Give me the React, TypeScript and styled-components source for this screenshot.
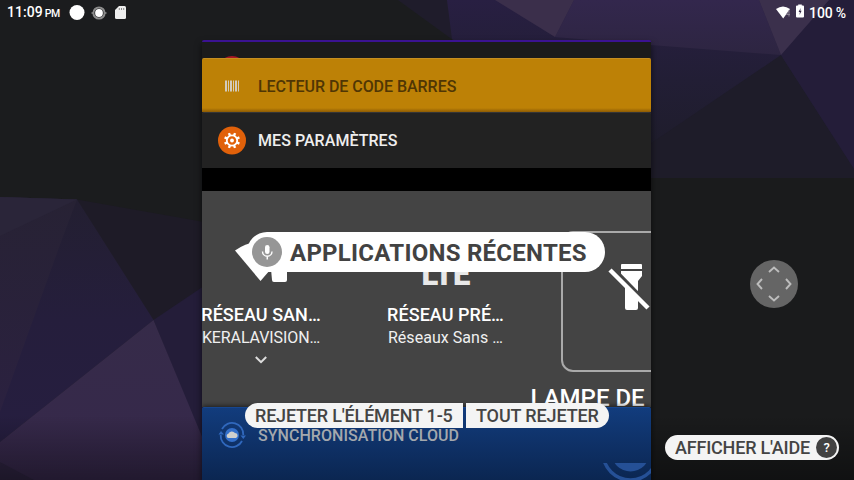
import React from "react";
import styled, { createGlobalStyle } from "styled-components";

const GlobalStyle = createGlobalStyle`
  html, body { margin: 0; padding: 0; background: #1b1c1e; }
  * { box-sizing: border-box; }
`;

const Screen = styled.main`
  position: relative;
  width: 854px;
  height: 480px;
  overflow: hidden;
  font-family: Roboto, "Liberation Sans", sans-serif;
  color: #fff;
`;

const Wallpaper = styled.svg`
  position: absolute;
  inset: 0;
  display: block;
`;

const StatusBar = styled.header`
  position: absolute;
  inset: 0 0 auto 0;
  height: 25px;
  padding: 0 8px 0 7px;
  display: flex;
  align-items: center;
  justify-content: space-between;
`;

const StatusGroup = styled.div<{ $gap: number }>`
  display: flex;
  align-items: center;
  gap: ${(p) => p.$gap}px;
`;

const StatusText = styled.span<{ $spacing?: number }>`
  font-size: 14px;
  line-height: 24px;
  font-weight: 500;
  letter-spacing: ${(p) => p.$spacing ?? 0}px;
  white-space: nowrap;
  small { font-size: 10.5px; margin-left: 2px; letter-spacing: -0.4px; }
`;

const Icon = styled.svg`
  display: block;
  flex: none;
  overflow: visible;
`;

const Stack = styled.section`
  position: relative;
  width: 449px;
  height: 440px;
  margin: 40px 0 0 202px;
  display: flex;
  flex-direction: column;
  box-shadow: 0 4px 7px 0 rgba(0, 0, 0, 0.6);
  border-radius: 2px 2px 0 0;
`;

const HiddenCard = styled.div`
  height: 18px;
  flex: none;
  overflow: hidden;
  display: flex;
  background: #1b1b1b;
  border-top: 2px solid #3b1292;
  border-radius: 2px 2px 0 0;
  padding: 14px 0 0 16px;
`;

const HiddenBadge = styled.div`
  width: 28px;
  height: 28px;
  border-radius: 50%;
  background: #a81724;
  flex: none;
`;

const CardHeader = styled.div<{ $bg: string; $edge: string; $fg: string; $h: number; $pt: number }>`
  height: ${(p) => p.$h}px;
  flex: none;
  display: flex;
  align-items: center;
  gap: 12px;
  padding: ${(p) => p.$pt}px 0 0 16px;
  background: ${(p) => p.$bg};
  border-top: 1px solid ${(p) => p.$edge};
  border-radius: 2px 2px 0 0;
  color: ${(p) => p.$fg};
`;

const CardTitle = styled.span<{ $spacing: number }>`
  font-size: 16px;
  line-height: 20px;
  font-weight: 500;
  letter-spacing: ${(p) => p.$spacing}px;
  white-space: nowrap;
`;

const BlackBar = styled.div`
  height: 23px;
  flex: none;
  background: #000;
`;

const Tiles = styled.div`
  height: 216px;
  flex: none;
  display: flex;
  align-items: flex-start;
  overflow: hidden;
  background: #444;
`;

const Tile = styled.div<{ $ml: number }>`
  width: 118px;
  margin-left: ${(p) => p.$ml}px;
  flex: none;
  display: flex;
  flex-direction: column;
  align-items: center;
  padding-top: 51px;
`;

const TileIcon = styled.div`
  height: 61px;
  display: flex;
`;

const TileName = styled.span`
  font-size: 18px;
  line-height: 24px;
  font-weight: 500;
  letter-spacing: 0.04px;
  white-space: nowrap;
`;

const TileDetail = styled.span<{ $spacing: number }>`
  font-size: 16px;
  line-height: 22px;
  letter-spacing: ${(p) => p.$spacing}px;
  color: #f0f0f0;
  white-space: nowrap;
`;

const Network = styled.span`
  font-size: 31px;
  line-height: 40px;
  font-weight: 900;
  letter-spacing: -0.8px;
  color: #e8e8e8;
  margin-top: 13px;
`;

const TorchTile = styled.div`
  margin-left: 54px;
  padding-top: 40px;
  flex: none;
  display: flex;
  flex-direction: column;
`;

const TorchFrame = styled.div`
  width: 140px;
  height: 141px;
  flex: none;
  margin-left: 2px;
  border: 2px solid #aaa;
  border-radius: 12px;
  padding: 30px 0 0 44px;
`;

const TorchName = styled.span`
  margin: 10px 0 0 -28px;
  font-size: 24px;
  line-height: 32px;
  font-weight: 500;
  white-space: nowrap;
`;

const CloudCard = styled.div`
  flex: 1;
  position: relative;
  background: linear-gradient(#123c7d, #0b2651);
  border-radius: 2px 2px 0 0;
  border-top: 1px solid #17468f;
  box-shadow: 0 -1px 5px rgba(0, 0, 0, 0.6);
  clip-path: inset(-8px 0 0 0);
`;

const CloudHeader = styled.div`
  height: 56px;
  display: flex;
  align-items: center;
  gap: 12px;
  padding-left: 16px;
  color: #a4a8ad;
`;

const CloudArt = styled.svg`
  position: absolute;
  right: 0;
  bottom: 0;
`;

const VoiceLabel = styled.div`
  position: absolute;
  left: 247px;
  top: 232px;
  width: 358px;
  height: 40px;
  border-radius: 20px;
  background: #fff;
  color: #424242;
  display: flex;
  align-items: center;
  gap: 8px;
  padding-left: 5px;
  font-size: 24px;
  font-weight: 700;
  letter-spacing: 0.26px;
  line-height: 28px;
  white-space: nowrap;
`;

const VoiceText = styled.span`
  padding-top: 2px;
`;

const VoiceActions = styled.div`
  position: absolute;
  left: 245px;
  top: 403px;
  display: flex;
  gap: 3px;
`;

const Action = styled.button<{ $w: number; $side: "left" | "right"; $spacing: number }>`
  width: ${(p) => p.$w}px;
  height: 25px;
  padding: 0 0 0 10px;
  border: 0;
  text-align: left;
  border-radius: ${(p) => (p.$side === "left" ? "13px 0 0 13px" : "0 13px 13px 0")};
  background: #f4f4f4;
  color: #444;
  font: 500 18px/25px Roboto, "Liberation Sans", sans-serif;
  letter-spacing: ${(p) => p.$spacing}px;
  white-space: nowrap;
`;

const HelpButton = styled.button`
  position: absolute;
  left: 665px;
  top: 435px;
  width: 174px;
  height: 25px;
  border: 0;
  padding: 0 2px 0 10px;
  display: flex;
  align-items: center;
  justify-content: space-between;
  border-radius: 13px;
  background: #f4f4f4;
  color: #444;
  font: 500 18px/25px Roboto, "Liberation Sans", sans-serif;
  letter-spacing: -0.2px;
  white-space: nowrap;
`;

const HelpMark = styled.span`
  width: 21px;
  height: 21px;
  border-radius: 50%;
  background: #424242;
  color: #fff;
  font-size: 13px;
  line-height: 21px;
  text-align: center;
`;

const Pad = styled.div`
  position: absolute;
  left: 750px;
  top: 260px;
  width: 48px;
  height: 48px;
  border-radius: 50%;
  background: #656565;
`;

const teeth = [0, 45, 90, 135, 180, 225, 270, 315];

export default function App() {
  return (
    <Screen>
      <GlobalStyle />
      <Wallpaper width="854" height="480" viewBox="0 0 854 480">
        <defs>
          <linearGradient id="fade" x1="0" y1="0" x2="0" y2="1">
            <stop offset="0" stopColor="#000" stopOpacity="0" />
            <stop offset="1" stopColor="#000" stopOpacity="0.38" />
          </linearGradient>
          <linearGradient id="deep" x1="0" y1="0" x2="0" y2="1">
            <stop offset="0" stopColor="#231f31" />
            <stop offset="0.5" stopColor="#251e3c" />
            <stop offset="1" stopColor="#261e40" />
          </linearGradient>
          <linearGradient id="side" x1="0" y1="0" x2="0" y2="1">
            <stop offset="0" stopColor="#272234" />
            <stop offset="1" stopColor="#2b2140" />
          </linearGradient>
          <linearGradient id="peak" x1="0" y1="0" x2="0" y2="1">
            <stop offset="0" stopColor="#362b49" />
            <stop offset="1" stopColor="#36284b" />
          </linearGradient>
          <linearGradient id="dusk" x1="0" y1="0" x2="0" y2="1">
            <stop offset="0" stopColor="#281f42" />
            <stop offset="0.45" stopColor="#221e35" />
            <stop offset="1" stopColor="#1d1c27" />
          </linearGradient>
          <linearGradient id="roof" x1="0" y1="0" x2="0" y2="1">
            <stop offset="0" stopColor="#33274d" />
            <stop offset="1" stopColor="#2d2541" />
          </linearGradient>
        </defs>
        <rect width="854" height="480" fill="#1b1c1e" />
        <path d="M0 197L77 199.500L210 223V480H0Z" fill="#1e1b27" />
        <path d="M0 197L77 199.500L153.500 320L0 442Z" fill="url(#deep)" />
        <path d="M0 197L77 199.500L61 242L0 412Z" fill="url(#side)" />
        <path d="M0 197L77 199.500L0 236Z" fill="#2a2539" />
        <path d="M153.500 320L210 282V460Z" fill="#241d39" />
        <path d="M153.500 320L0 442V480H220Z" fill="url(#peak)" />
        <path d="M0 462L34 480H0Z" fill="#2e2441" />
        <path d="M398 0H448L453 40Z" fill="#1f1c2b" />
        <path d="M447 0H854V178H640L452 39Z" fill="url(#dusk)" />
        <path d="M574 0H759L781 55L651 45L555 37Z" fill="url(#roof)" />
        <path d="M495 0H574L555 37Z" fill="#3b2f4b" />
        <path d="M781 55L854 169V178H600Z" fill="#1e1c29" />
        <path d="M781 55L854 169V0H829Z" fill="#241d39" />
        <path d="M759 0H829L781 55Z" fill="#3b304c" />
        <rect x="600" y="178" width="254" height="302" fill="#1a1b1c" />
        <rect y="415" width="854" height="65" fill="url(#fade)" />
      </Wallpaper>

      <StatusBar>
        <StatusGroup $gap={8}>
          <StatusText $spacing={0.05}>11:09<small>PM</small></StatusText>
          <Icon width="15" height="15" viewBox="0 0 15 15">
            <circle cx="9" cy="7.500" r="7.500" fill="#fff" />
          </Icon>
          <Icon width="16" height="16" viewBox="0 0 16 16">
            <circle cx="8" cy="8" r="5.600" fill="none" stroke="#8c8c8c" strokeWidth="2" />
            <path d="M.5 8H3M13 8H15.500" stroke="#8c8c8c" strokeWidth="1.500" />
            <circle cx="8" cy="8" r="3.900" fill="#fff" />
          </Icon>
          <Icon width="12" height="13" viewBox="0 0 12 13">
            <path d="M4 0H9.500Q11 0 11 1.500V11.500Q11 13 9.500 13H1.500Q0 13 0 11.500V4Z" fill="#eee" />
            <path d="M4.300 2V4M6.500 2V4M8.700 2V4" stroke="#8a8a8a" strokeWidth="1" />
          </Icon>
        </StatusGroup>
        <StatusGroup $gap={5}>
          <Icon width="15" height="14" viewBox="0 0 15 14">
            <path d="M0 3Q7 -2 14 3L7.200 12.500Z" fill="#fff" />
            <path d="M13 4.500L10.500 8.500H14M13 4.500V10.500" fill="none" stroke="#8a8292" />
          </Icon>
          <Icon width="8" height="16" viewBox="0 0 8 16">
            <path d="M2.200 -.5H5.800V.5H7Q8 .5 8 1.500V11.500Q8 12.500 7 12.500H1Q0 12.500 0 11.500V1.500Q0 .5 1 .5H2.200Z" fill="#fff" />
            <path d="M4.600 3L2.600 7H3.900L3.500 10L5.600 5.700H4.300Z" fill="#302543" />
          </Icon>
          <StatusText $spacing={-0.15}>100 %</StatusText>
        </StatusGroup>
      </StatusBar>

      <Stack>
        <HiddenCard><HiddenBadge /></HiddenCard>
        <CardHeader $h={54} $pt={2} $bg="linear-gradient(transparent 49px, rgba(70,35,0,.4)), #bd8106" $edge="#c58e20" $fg="#503604">
          <Icon width="28" height="28" viewBox="0 0 28 28">
            <path d="M7 7.500h2v11H7zM10 7.500h1v11h-1zM12 7.500h2v11h-2zM15 7.500h1v11h-1zM17 7.500h2v11h-2zM20 7.500h1v11h-1z" fill="#d3cbbb" />
          </Icon>
          <CardTitle $spacing={-0.04}>LECTEUR DE CODE BARRES</CardTitle>
        </CardHeader>
        <CardHeader $h={56} $pt={0} $bg="#222" $edge="#353535" $fg="#eee">
          <Icon width="28" height="28" viewBox="0 0.5 28 28">
            <circle cx="14" cy="14" r="14" fill="#e1610a" />
            <circle cx="14" cy="14" r="5.200" fill="none" stroke="#fff" strokeWidth="1.800" />
            {teeth.map((a) => (
              <path key={a} d="M12.800 6H15.200V9H12.800Z" fill="#fff" transform={`rotate(${a + 22.5} 14 14)`} />
            ))}
            <circle cx="14" cy="14" r="1.900" fill="#fff" />
          </Icon>
          <CardTitle $spacing={0.05}>MES PARAMÈTRES</CardTitle>
        </CardHeader>
        <BlackBar />
        <Tiles>
          <Tile $ml={0}>
            <TileIcon>
              <Icon width="52" height="41" viewBox="0 0 52 41">
                <path d="M0 8.500Q25 -9 52 8.500L25.500 39Z" fill="#fff" />
                <path d="M36 27H52V38Q52 40 50 40H39Q37 40 37 38Z" fill="#fff" />
              </Icon>
            </TileIcon>
            <TileName>RÉSEAU SAN…</TileName>
            <TileDetail $spacing={-0.1}>KERALAVISION…</TileDetail>
            <Icon width="12" height="22" viewBox="0 0 12 22">
              <path d="M.8 8L6 13.200L11.200 8" fill="none" stroke="#ddd" strokeWidth="2" />
            </Icon>
          </Tile>
          <Tile $ml={66.5}>
            <TileIcon><Network>LTE</Network></TileIcon>
            <TileName>RÉSEAU PRÉ…</TileName>
            <TileDetail $spacing={0.05}>Réseaux Sans …</TileDetail>
          </Tile>
          <TorchTile>
            <TorchFrame>
              <Icon width="42" height="50" viewBox="0 0 42 50">
                <path d="M14 2Q14 1 15 1H34Q35 1 35 2V6H14ZM14 8H35V13L31 18V45Q31 47 29 47H20Q18 47 18 45V18L14 13Z" fill="#fff" />
                <path d="M5 4L43 43" stroke="#444" strokeWidth="3.500" />
                <path d="M3 7L41 45" stroke="#fff" strokeWidth="4.500" />
              </Icon>
            </TorchFrame>
            <TorchName>LAMPE DE</TorchName>
          </TorchTile>
        </Tiles>
        <CloudCard>
          <CloudHeader>
            <Icon width="28" height="28" viewBox="0 0 28 28">
              <path d="M4 7A11.300 11.300 0 0 1 25.300 13M24 19A11.300 11.300 0 0 1 2.700 13" fill="none" stroke="#3068bd" strokeWidth="1.800" />
              <path d="M22.500 13.500H28L25.300 17ZM.5 12.500H6L3 9Z" fill="#3068bd" />
              <circle cx="14" cy="13" r="7" fill="#3470cb" />
              <path d="M10.500 16A2.200 2.200 0 0 1 10.300 11.700A4 4 0 0 1 17 11A2.600 2.600 0 0 1 18 16Z" fill="#d0d0cd" />
            </Icon>
            <CardTitle $spacing={0.05}>SYNCHRONISATION CLOUD</CardTitle>
          </CloudHeader>
          <CloudArt width="49" height="17" viewBox="0 0 49 17">
            <circle cx="28.500" cy="-10.500" r="27.500" fill="none" stroke="#255096" strokeWidth="3.500" />
            <circle cx="28.500" cy="-10.500" r="19" fill="#255096" />
          </CloudArt>
        </CloudCard>
      </Stack>

      <VoiceLabel>
        <Icon width="30" height="30" viewBox="0 0 30 30">
          <circle cx="15" cy="15" r="15" fill="#969696" />
          <rect x="13" y="8" width="4.500" height="9" rx="2.250" fill="#fff" />
          <path d="M10.500 14.500A4.750 4.750 0 0 0 20 14.500M15.250 19.500V22.500" fill="none" stroke="#fff" strokeWidth="1.400" />
        </Icon>
        <VoiceText>APPLICATIONS RÉCENTES</VoiceText>
      </VoiceLabel>

      <VoiceActions>
        <Action $w={218} $side="left" $spacing={-0.19}>REJETER L'ÉLÉMENT 1-5</Action>
        <Action $w={143} $side="right" $spacing={-0.12}>TOUT REJETER</Action>
      </VoiceActions>

      <Pad>
        <Icon width="48" height="48" viewBox="0 0 48 48">
          <path d="M19 12L24 7.500L29 12M19 36L24 40.500L29 36M12 19L7.500 24L12 29M36 19L40.500 24L36 29" fill="none" stroke="#bdbdbd" strokeWidth="1.900" />
        </Icon>
      </Pad>

      <HelpButton>AFFICHER L'AIDE<HelpMark>?</HelpMark></HelpButton>
    </Screen>
  );
}
